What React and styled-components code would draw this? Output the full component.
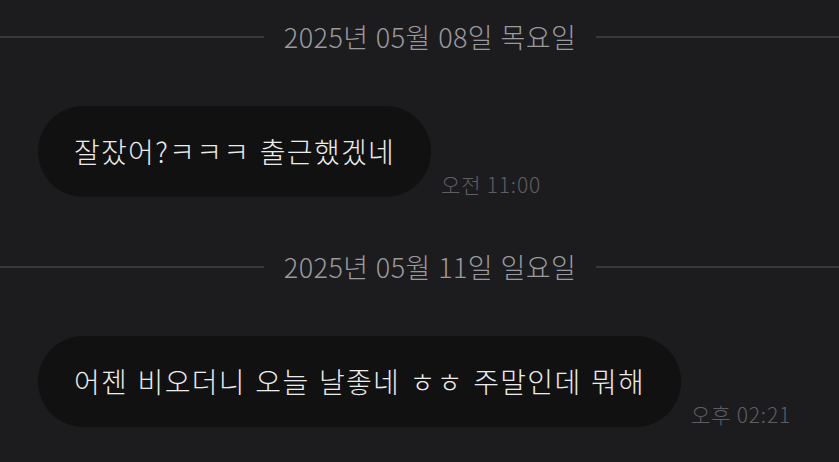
import styled, { createGlobalStyle } from "styled-components";

const GlobalStyle = createGlobalStyle`
  html, body {
    margin: 0;
    padding: 0;
    background-color: #1c1c1e;
    overflow: hidden;
  }
  body {
    font-family: "Noto Sans CJK KR", "Noto Sans", sans-serif;
  }
`;

// the screenshot is cropped: the thread is a bit wider than the window
const ChatWrap = styled.div`
  width: 860px;
  height: 462px;
  overflow: hidden;
  background-color: #1c1c1e;
  padding-top: 19px;
  box-sizing: border-box;
  display: flex;
  flex-direction: column;
`;

const DateRow = styled.div`
  display: flex;
  align-items: center;
  height: 36px;
  gap: 20px;
  margin-bottom: ${(p) => p.$after}px;
`;

const Line = styled.div`
  flex: 1;
  height: 2px;
  background-color: #38383a;
`;

const DateText = styled.span`
  font-size: 27px;
  font-weight: 300;
  letter-spacing: 0.4px;
  word-spacing: 1px;
  line-height: 36px;
  color: #9a9a9e;
  white-space: nowrap;
`;

const MessageRow = styled.div`
  display: flex;
  align-items: flex-end;
  gap: 10px;
  padding-left: 38px;
  margin-bottom: ${(p) => p.$after}px;
`;

const Bubble = styled.div`
  background-color: #111112;
  color: #ececec;
  font-size: 28px;
  font-weight: 300;
  letter-spacing: 1.3px;
  word-spacing: 2px;
  line-height: 91px;
  height: 91px;
  padding: 0 36px;
  border-radius: 46px;
  white-space: nowrap;
  box-sizing: border-box;
`;

const Time = styled.span`
  font-size: 21px;
  font-weight: 300;
  letter-spacing: 0.8px;
  line-height: 26px;
  color: #5e5e62;
  white-space: nowrap;
`;

const chat = [
  {
    date: "2025년 05월 08일 목요일",
    text: "잘잤어?ㅋㅋㅋ 출근했겠네",
    time: "오전 11:00",
  },
  {
    date: "2025년 05월 11일 일요일",
    text: "어젠 비오더니 오늘 날좋네 ㅎㅎ 주말인데 뭐해",
    time: "오후 02:21",
  },
];

function App() {
  return (
    <>
      <GlobalStyle />
      <ChatWrap>
        {chat.map((c) => (
          <div key={c.date}>
            <DateRow $after={51}>
              <Line />
              <DateText>{c.date}</DateText>
              <Line />
            </DateRow>
            <MessageRow $after={52}>
              <Bubble>{c.text}</Bubble>
              <Time>{c.time}</Time>
            </MessageRow>
          </div>
        ))}
      </ChatWrap>
    </>
  );
}

export default App;
